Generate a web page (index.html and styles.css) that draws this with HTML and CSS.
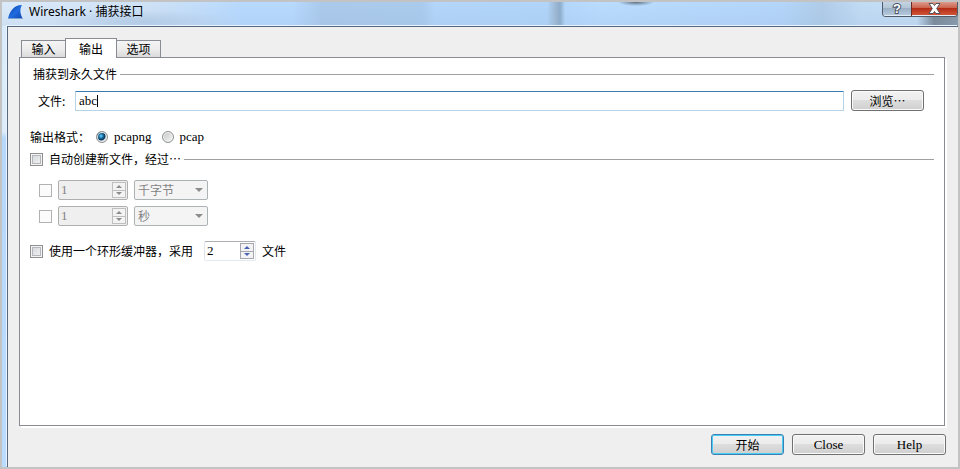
FILE: index.html
```
<!DOCTYPE html>
<html lang="zh-CN">
<head>
    <meta charset="UTF-8">
    <meta name="viewport" content="width=device-width, initial-scale=1.0">
    <title>Wireshark · 捕获接口</title>
    <link rel="stylesheet" href="styles.css">
</head>
<body>
    <div class="window">
        <header class="titlebar">
            <svg class="logo" width="16" height="16" viewBox="0 0 16 16" aria-hidden="true">
                <defs>
                    <linearGradient id="fin" x1="0" y1="0" x2="1" y2="1">
                        <stop offset="0" stop-color="#0b3f9c"/>
                        <stop offset="0.5" stop-color="#1f6be0"/>
                        <stop offset="1" stop-color="#0d46ad"/>
                    </linearGradient>
                </defs>
                <path d="M0 15 C1 9 5 1 14 1 C11.500 5 12 10 15 15 Z" fill="url(#fin)"/>
                <path d="M0 14.500 H15" stroke="#7ea0cc" stroke-width="1"/>
            </svg>
            <span class="title">Wireshark · 捕获接口</span>
            <div class="window-buttons">
                <button type="button" class="win-help" aria-label="帮助">?</button>
                <button type="button" class="win-close" aria-label="关闭">
                    <svg width="13" height="11" viewBox="0 0 13 11">
                        <path d="M1 .5 H5 L6.500 2.500 L8 .5 H12 L8.700 5.500 L12 10.500 H8 L6.500 8.500 L5 10.500 H1 L4.300 5.500 Z" fill="#fff" stroke="#53525f"/>
                    </svg>
                </button>
            </div>
        </header>

        <main class="client">
            <nav class="tabs">
                <button type="button" class="tab">输入</button>
                <button type="button" class="tab active">输出</button>
                <button type="button" class="tab">选项</button>
            </nav>

            <section class="panel">
                <div class="group-title">
                    <span>捕获到永久文件</span>
                    <span class="rule"></span>
                </div>

                <div class="file-row">
                    <label for="file">文件:</label>
                    <div class="file-box">
                        <input type="text" id="file" value="abc" size="3">
                        <span class="caret"></span>
                    </div>
                    <button type="button" class="btn">浏览…</button>
                </div>

                <div class="format-row">
                    <span>输出格式：</span>
                    <input type="radio" name="format" id="pcapng" checked>
                    <label for="pcapng" class="latin">pcapng</label>
                    <input type="radio" name="format" id="pcap">
                    <label for="pcap" class="latin">pcap</label>
                </div>

                <div class="auto-row">
                    <input type="checkbox" id="auto">
                    <label for="auto">自动创建新文件，经过…</label>
                    <span class="rule"></span>
                </div>

                <div class="limits">
                    <div class="limit">
                        <input type="checkbox" disabled aria-label="按大小">
                        <div class="spin disabled">
                            <input type="number" value="1" disabled aria-label="大小">
                            <span class="steps"><i class="up"></i><i class="down"></i></span>
                        </div>
                        <div class="combo">
                            <select disabled aria-label="大小单位"><option>千字节</option></select>
                        </div>
                    </div>
                    <div class="limit">
                        <input type="checkbox" disabled aria-label="按时间">
                        <div class="spin disabled">
                            <input type="number" value="1" disabled aria-label="时间">
                            <span class="steps"><i class="up"></i><i class="down"></i></span>
                        </div>
                        <div class="combo">
                            <select disabled aria-label="时间单位"><option>秒</option></select>
                        </div>
                    </div>
                </div>

                <div class="ring-row">
                    <input type="checkbox" id="ring">
                    <label for="ring">使用一个环形缓冲器，采用</label>
                    <div class="spin small">
                        <input type="number" id="count" value="2">
                        <span class="steps"><i class="up"></i><i class="down"></i></span>
                    </div>
                    <label for="count">文件</label>
                </div>
            </section>

            <footer class="actions">
                <button type="button" class="btn default">开始</button>
                <button type="button" class="btn latin">Close</button>
                <button type="button" class="btn latin">Help</button>
            </footer>
        </main>
    </div>
</body>
</html>
```
FILE: styles.css
```
* {
    box-sizing: border-box;
}
body {
    margin: 0;
    font: 12px/16px "Noto Sans CJK SC", sans-serif;
    color: #000;
}
button, input, select {
    font: inherit;
    color: inherit;
    margin: 0;
}
.latin {
    font-family: "Liberation Serif", serif;
    font-size: 13px;
}

/* window frame */
.window {
    display: flex;
    flex-direction: column;
    min-height: 100vh;
    border: 2px solid #c3c3c3;
    background: linear-gradient(#d9ebfb 0, #dcecfa 130px, #b5d8fb 136px, #b9dcff 100%);
}
.titlebar {
    display: flex;
    align-items: flex-start;
    height: 24px;
    padding-left: 6px;
    background:
        radial-gradient(ellipse 18px 4px at 634px 0, #5f6f80 0, transparent 100%),
        linear-gradient(90deg, transparent 545px, #9bb6d2 554px, #8eacca 558px, transparent 563px),
        radial-gradient(ellipse 90px 12px at 140px 20px, #b4cbe6 0, transparent 100%),
        linear-gradient(transparent 0, rgba(150, 180, 215, 0.2) 100%),
        linear-gradient(90deg, #dcebfa 0, #cfe2f6 150px, #b8daff 240px, #b8daff 290px, #abcaeb 320px, #abcbed 420px, #b3d6fa 432px, #b1d5fa 540px, #b9dcff 600px, #b4d6fa 780px, #b0cce8 820px, #c3dcf5 860px, #c5def5 915px, #75838f 932px, #8494a4 100%);
}
.logo {
    margin-top: 2px;
}
.title {
    margin: 2px 0 0 5px;
    font-family: "Noto Sans", "Noto Sans CJK SC", sans-serif;
}
.window-buttons {
    display: flex;
    height: 15px;
    margin-left: auto;
    border: 1px solid #4f5b68;
    border-top: 0;
    border-radius: 0 0 4px 4px;
    overflow: hidden;
}
.window-buttons button {
    display: flex;
    align-items: center;
    justify-content: center;
    padding: 0;
    border: 0;
    box-shadow: inset 0 -1px #e3edf7;
}
.win-help {
    width: 28px;
    background: linear-gradient(#c4d4e5 0, #b4c5d6 40%, #9aafc4 45%, #b8cce0 100%);
    color: #fff;
    font: bold 13px/12px "Liberation Sans", sans-serif;
    -webkit-text-stroke: 2px #4d5566;
    paint-order: stroke fill;
}
.window-buttons .win-close {
    width: 46px;
    padding-bottom: 2px;
    border-left: 1px solid #6b2a24;
    background: linear-gradient(#dc9b8c 0, #cc6550 40%, #b52c16 45%, #d35b3c 100%);
}

/* client area */
.client {
    flex: 1;
    display: flex;
    flex-direction: column;
    margin-left: 5px;
    padding: 11px 12px 12px 11px;
    border: solid #56687d;
    border-width: 1px 0 0 1px;
    box-shadow: -1px -1px #e8f3fd;
    background: #efefef;
}
.tabs {
    display: flex;
    align-items: flex-end;
    height: 19px;
    margin-left: 2px;
}
.tab {
    width: 45px;
    height: 17px;
    padding: 0;
    border: 1px solid #898c95;
    border-bottom: 0;
    background: linear-gradient(#f4f4f4 0, #ededed 50%, #dadada 100%);
}
.tab.active {
    z-index: 1;
    width: 52px;
    height: 20px;
    margin: 0 -1px -1px;
    background: #fff;
}
.panel {
    flex: 1;
    margin-right: 1px;
    padding: 8px 10px;
    border: 1px solid #898c95;
    box-shadow: 2px 2px #fff;
    background: #fff;
}
.group-title {
    display: flex;
    align-items: center;
    gap: 3px;
    padding-left: 3px;
}
.rule {
    flex: 1;
    height: 1px;
    background: #a0a0a0;
}
.file-row {
    display: flex;
    align-items: center;
    gap: 7px;
    margin-top: 8px;
    padding: 0 10px 0 8px;
}
.file-row label {
    width: 30px;
}
.file-box {
    flex: 1;
    display: flex;
    align-items: center;
    height: 20px;
    padding-left: 3px;
    border: 1px solid #b5d3e7;
    border-top-color: #3d7bad;
    border-radius: 1px;
}
.file-box input {
    width: 18px;
    padding: 0;
    border: 0;
    outline: 0;
    background: none;
    font: 13px/16px "Liberation Serif", serif;
}
.caret {
    width: 1px;
    height: 12px;
    background: #000;
}

/* buttons */
.btn {
    width: 73px;
    height: 21px;
    padding: 0;
    border: 1px solid #707070;
    border-radius: 3px;
    box-shadow: inset 0 0 0 1px #fafafa;
    background: linear-gradient(#f2f2f2 0, #ebebeb 50%, #dddddd 50%, #cfcfcf 100%);
}
.btn.default {
    border-color: #3c7fb1;
    box-shadow: inset 0 0 0 1px #48cdf4;
}

/* check boxes and radios */
input[type="checkbox"] {
    appearance: none;
    width: 13px;
    height: 13px;
    border: 1px solid #8e8f8f;
    box-shadow: inset 0 0 0 1px #f4f4f4, inset 0 0 0 2px #b4b8bd;
    background: linear-gradient(135deg, #cfd3d8, #f6f6f6);
}
input[type="checkbox"]:disabled {
    border-color: #b1b1b1;
    box-shadow: none;
    background: #fbfbfb;
}
input[type="radio"] {
    appearance: none;
    width: 12px;
    height: 12px;
    border: 1px solid #8e8f8f;
    border-radius: 50%;
    box-shadow: inset 0 0 0 1px #f4f4f4;
    background: linear-gradient(135deg, #c3c6ca, #f6f6f6);
}
input[type="radio"]:checked {
    background: radial-gradient(circle at 4px 4px, #7fd4f5 0, #1b7bb0 2px, #0b2f52 4px, #cfd8e0 5px);
}

.format-row {
    display: flex;
    align-items: center;
    height: 16px;
    margin-top: 18px;
}
.format-row input {
    margin: 0 6px;
}
.format-row label {
    margin-right: 4px;
}
.auto-row {
    display: flex;
    align-items: center;
    gap: 3px;
    margin-top: 6px;
}
.auto-row input {
    margin-right: 3px;
}

.limits {
    display: flex;
    flex-direction: column;
    gap: 6px;
    margin: 13px 0 0 9px;
    color: #838383;
}
.limit {
    display: flex;
    align-items: center;
    gap: 6px;
}
.spin {
    display: flex;
    width: 70px;
    height: 20px;
    padding: 1px;
    border: 1px solid #e3e9ef;
    border-top-color: #abadb3;
    border-left-color: #e2e3ea;
    border-radius: 2px;
    background: #fff;
}
.spin input {
    appearance: textfield;
    flex: 1;
    min-width: 0;
    padding: 0 1px;
    border: 0;
    outline: 0;
    background: none;
    font: 13px/16px "Liberation Serif", serif;
}
.spin input::-webkit-inner-spin-button {
    display: none;
}
.spin.disabled {
    border-color: #afafaf;
    background: #efefef;
}
.steps {
    display: flex;
    flex-direction: column;
    width: 14px;
    border: 1px solid #a6a6ae;
    background: #f3f3f3;
}
.steps i {
    flex: 1;
    display: flex;
    align-items: center;
    justify-content: center;
}
.steps .down {
    border-top: 1px solid #a6a6ae;
}
.steps i::after {
    content: "";
    border: 3px solid transparent;
    border-top-width: 0;
    border-bottom: 3px solid #4a62b5;
}
.steps .down::after {
    border-bottom-width: 0;
    border-top: 3px solid #4a62b5;
}
.disabled .steps {
    border-color: #bfbfbf;
}
.disabled .steps .down {
    border-top-color: #bfbfbf;
}
.disabled .steps .up::after {
    border-bottom-color: #8c8c8c;
}
.disabled .steps .down::after {
    border-top-color: #8c8c8c;
}
.combo {
    display: grid;
    align-items: center;
    width: 74px;
}
.combo select, .combo::after {
    grid-area: 1 / 1;
}
.combo::after {
    content: "";
    justify-self: end;
    margin-right: 5px;
    border: 4px solid transparent;
    border-top-color: #8c8c8c;
    border-bottom-width: 0;
}
.combo select {
    appearance: none;
    width: 100%;
    height: 20px;
    padding: 0 3px;
    border: 1px solid #adb2b5;
    border-radius: 2px;
    background: #f4f4f4;
    opacity: 1;
}

.ring-row {
    display: flex;
    align-items: center;
    gap: 6px;
    margin-top: 15px;
}
.spin.small {
    width: 52px;
    margin-left: 5px;
}

.actions {
    display: flex;
    justify-content: flex-end;
    gap: 8px;
    margin-top: 8px;
}
```
